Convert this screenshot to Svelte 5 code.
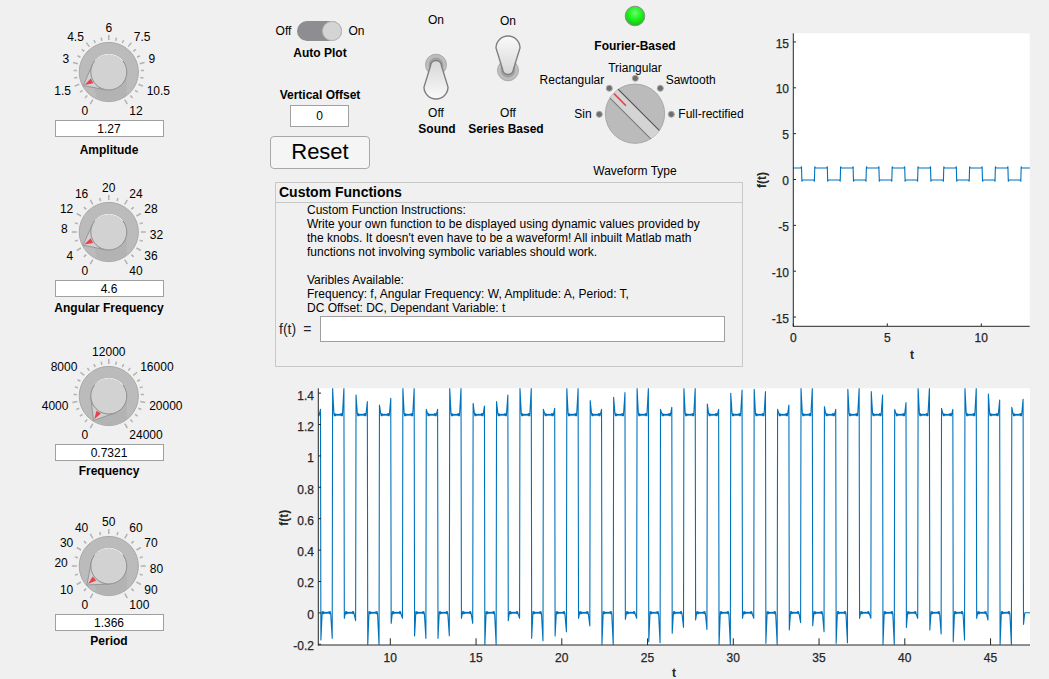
<script lang="ts">
    type Knob = { name: string; value: string; labels: string[]; minors: number; angle: number };

    const KNOBS: Knob[] = [
        { name: 'Amplitude', value: '1.27', labels: ['0', '1.5', '3', '4.5', '6', '7.5', '9', '10.5', '12'], minors: 2, angle: 208 },
        { name: 'Angular Frequency', value: '4.6', labels: ['0', '4', '8', '12', '16', '20', '24', '28', '32', '36', '40'], minors: 1, angle: 207 },
        { name: 'Frequency', value: '0.7321', labels: ['0', '4000', '8000', '12000', '16000', '20000', '24000'], minors: 3, angle: 238 },
        { name: 'Period', value: '1.366', labels: ['0', '10', '20', '30', '40', '50', '60', '70', '80', '90', '100'], minors: 1, angle: 221 }
    ];

    const CX = 108.8;
    const CY = 70;
    const rad = (deg: number) => (deg * Math.PI) / 180;
    const polar = (deg: number, r: number) => [CX + r * Math.cos(rad(deg)), CY - r * Math.sin(rad(deg))];

    function ticks(k: Knob) {
        const majors = k.labels.length - 1;
        const step = 300 / majors / (k.minors + 1);
        const out = [];
        for (let i = 0; i <= majors * (k.minors + 1); i++) {
            const major = i % (k.minors + 1) === 0;
            const a = 240 - i * step;
            const [x1, y1] = polar(a, 32);
            const [x2, y2] = polar(a, major ? 37 : 35.2);
            out.push({ x1, y1, x2, y2 });
        }
        return out;
    }

    // labels sit outside a fixed radius, pushed out by half their own box
    function labelPlace(text: string, index: number, count: number) {
        const a = rad(240 - (index * 300) / (count - 1));
        const c = Math.cos(a);
        const s = Math.sin(a);
        let w = 0;
        for (const ch of text) w += ch === '.' ? 3.33 : 6.67;
        return {
            x: CX + 41 * c + (Math.abs(c) < 0.01 ? 0 : Math.sign(c) * (w / 2)),
            y: CY - 41 * s + (s > 0 ? -2.7 : 3.3)
        };
    }

    // teardrop running from the cap of the knob out to its pointer tip
    function pointer(angle: number) {
        const r = 18;
        const [tx, ty] = polar(angle, 29);
        const alpha = Math.acos(r / 29);
        const base = Math.atan2(ty - CY, tx - CX);
        const p1 = [CX + r * Math.cos(base - alpha), CY + r * Math.sin(base - alpha)];
        const p2 = [CX + r * Math.cos(base + alpha), CY + r * Math.sin(base + alpha)];
        const [a1x, a1y] = polar(angle, 27.5);
        const [bx, by] = polar(angle, 19);
        const nx = -(by - CY) / 19;
        const ny = (bx - CX) / 19;
        return {
            drop: `M${p1[0]} ${p1[1]}L${tx} ${ty}L${p2[0]} ${p2[1]}Z`,
            red: `M${a1x} ${a1y}L${bx + nx * 2.6} ${by + ny * 2.6}L${bx - nx * 2.6} ${by - ny * 2.6}Z`
        };
    }

    // zoomed readings of the peak and trough at every edge of the large trace
    const TOPS = [88, 25, 25, 45, 65, 75, 55, 25, 25, 88, 88, 25, 25, 70, 78, 65, 45, 25, 25, 88, 85, 25, 25, 62, 88, 52, 38, 25, 25, 88, 82, 25, 25, 72, 88, 40, 30, 28, 35, 88, 75, 25, 25, 80, 88, 28, 25, 35, 45, 88, 68, 25, 25, 85, 88, 25, 25, 42, 60, 82, 58];
    const BOTS = [780, 775, 715, 722, 795, 795, 730, 715, 768, 775, 775, 767, 715, 730, 795, 795, 722, 715, 775, 782, 768, 755, 715, 738, 795, 795, 718, 715, 785, 788, 760, 742, 720, 748, 795, 795, 715, 715, 790, 795, 750, 728, 737, 755, 790, 788, 715, 715, 795, 795, 742, 715, 750, 762, 785, 780, 715, 720, 795, 795, 733];

    function mainTrace() {
        const hi = 414.7;
        const lo = 612.7;
        const pts: string[] = [`316 ${hi}`];
        let prev = 316;
        for (let k = 0; k < TOPS.length; k++) {
            const x = 320.7 + 11.71 * k;
            const top = 380 + TOPS[k] / 3;
            const bot = 380 + BOTS[k] / 3;
            const down = k % 2 === 0;
            const lvl = down ? hi : lo;
            let i = 0;
            for (let s = prev + 1.5; s < x - 1.3; s += 0.5) {
                const edge = Math.min(s - prev, x - s);
                const amp = edge < 3.5 ? 1.1 : 0.45;
                pts.push(`${s.toFixed(2)} ${(lvl + (i++ % 2 ? amp : -amp)).toFixed(2)}`);
            }
            if (down) pts.push(`${x - 0.2} ${top}`, `${x + 0.2} ${bot}`);
            else pts.push(`${x - 0.2} ${bot}`, `${x + 0.2} ${top}`);
            prev = x;
        }
        for (let s = prev + 1.5; s < 1032; s += 0.5) pts.push(`${s} ${lo}`);
        return pts.join(' ');
    }

    function smallTrace() {
        const pts: string[] = ['793 168'];
        for (let k = 0; k < 18; k++) {
            const x = 801.7 + 12.9 * k;
            const down = k % 2 === 0;
            const a = down ? 166.8 : 181.2;
            const b = down ? 181.2 : 166.8;
            const lvlA = down ? 168 : 180;
            pts.push(`${x - 1} ${lvlA}`, `${x - 0.2} ${a}`, `${x + 0.2} ${b}`, `${x + 1} ${down ? 180 : 168}`);
        }
        pts.push('1030 168');
        return pts.join(' ');
    }

    const MAIN_Y = ['-0.2', '0', '0.2', '0.4', '0.6', '0.8', '1', '1.2', '1.4'];
    const MAIN_X = [10, 15, 20, 25, 30, 35, 40, 45];
    const SMALL_Y = [15, 10, 5, 0, -5, -10, -15];
    const SMALL_X = [0, 5, 10];
</script>

{#snippet lever(up: boolean)}
    <svg class="lever" width="72" height="78" viewBox="0 0 72 78">
        <g transform={up ? 'matrix(1 0 0 -1 0 80)' : undefined}>
            <circle cx="36" cy="37.7" r="10.5" fill="#bdbdbd" stroke="#a9a9a9" />
            <circle cx="36" cy="38" r="7.4" fill="#a2a2a2" />
            <path d="M30.5 39A5.5 5.5 0 0 1 41.5 39L48 60A12 12 0 0 1 24 60Z" fill={up ? 'url(#lever-up)' : 'url(#lever-down)'} stroke="#7f7f7f" stroke-width="1.4" />
        </g>
    </svg>
{/snippet}

<svg class="defs" width="0" height="0" aria-hidden="true">
    <defs>
        <linearGradient id="lever-down" x1="0" y1="0" x2="0" y2="1">
            <stop offset="0" stop-color="#d6d6d6" />
            <stop offset="1" stop-color="#fafafa" />
        </linearGradient>
        <linearGradient id="lever-up" x1="0" y1="1" x2="0" y2="0">
            <stop offset="0" stop-color="#fafafa" />
            <stop offset="1" stop-color="#d6d6d6" />
        </linearGradient>
        <radialGradient id="lamp" cx="0.5" cy="0.35" r="0.65">
            <stop offset="0" stop-color="#66ff66" />
            <stop offset="0.6" stop-color="#14ee14" />
            <stop offset="1" stop-color="#22b522" />
        </radialGradient>
        <clipPath id="rotary-clip"><circle cx="635" cy="113.7" r="29.6" /></clipPath>
        <clipPath id="main-clip"><rect x="318.5" y="388.3" width="711.5" height="256.5" /></clipPath>
    </defs>
</svg>

<div class="app">
    <aside class="knobs">
        {#each KNOBS as k}
            {@const pt = pointer(k.angle)}
            <section class="knob">
                <svg width="218" height="118" viewBox="0 0 218 118">
                    {#each ticks(k) as t}
                        <line x1={t.x1} y1={t.y1} x2={t.x2} y2={t.y2} class="tick" />
                    {/each}
                    {#each k.labels as text, i}
                        {@const p = labelPlace(text, i, k.labels.length)}
                        <text x={p.x} y={p.y} class="scale">{text}</text>
                    {/each}
                    <circle cx={CX} cy={CY} r="29.6" class="dial" />
                    <path d="M{CX + 18} {CY}L{CX + 18} {CY + 23}A29.2 29.2 0 0 1 {CX - 12} {CY + 26.6}L{CX - 18} {CY}Z" fill="#b3b3b3" />
                    <path d={pt.drop} class="drop" />
                    <path d={pt.red} fill="#e8404a" />
                    <circle cx={CX} cy={CY} r="18" class="cap" />
                    <path d="M{CX - 14} {CY - 11.2}A18 18 0 0 1 {CX + 14} {CY - 11.2}" class="cap-light" />
                </svg>
                <div class="num">{k.value}</div>
                <div class="title">{k.name}</div>
            </section>
        {/each}
    </aside>

    <main class="workspace">
        <div class="upper">
            <div class="controls">
                <div class="top-row">
                    <div class="basics">
                        <div class="switch-row">
                            <span>Off</span>
                            <span class="track"><span class="thumb"></span></span>
                            <span>On</span>
                        </div>
                        <div class="title auto-title">Auto Plot</div>
                        <div class="title offset-title">Vertical Offset</div>
                        <div class="num offset-num">0</div>
                        <button class="reset" type="button">Reset</button>
                    </div>

                    <div class="toggle">
                        <span class="state">On</span>
                        {@render lever(false)}
                        <span class="state off">Off</span>
                        <span class="title toggle-title sound">Sound</span>
                    </div>
                    <div class="toggle series">
                        <span class="state">On</span>
                        {@render lever(true)}
                        <span class="state off">Off</span>
                        <span class="title toggle-title series-title">Series Based</span>
                    </div>

                    <div class="wave">
                        <svg class="lamp" width="22" height="22" viewBox="0 0 22 22">
                            <circle cx="11" cy="11" r="9.8" fill="url(#lamp)" stroke="#8f8f8f" />
                        </svg>
                        <div class="title fourier">Fourier-Based</div>
                        <svg class="rotary" width="218" height="100" viewBox="526 60 218 100">
                            <text x="635" y="67.7" class="mid">Triangular</text>
                            <text x="604.3" y="79.7" class="end">Rectangular</text>
                            <text x="591.7" y="113.7" class="end">Sin</text>
                            <text x="665.7" y="79.7" class="start">Sawtooth</text>
                            <text x="678.3" y="113.7" class="start">Full-rectified</text>
                            <circle cx="635.3" cy="78.3" r="3" class="dot" />
                            <circle cx="609.3" cy="88.3" r="3" class="dot" />
                            <circle cx="660.3" cy="88.3" r="3" class="dot" />
                            <circle cx="599.3" cy="114.3" r="3" class="dot" />
                            <circle cx="671.3" cy="114.3" r="3" class="dot" />
                            <circle cx="635" cy="113.7" r="29.6" class="dial" />
                            <g clip-path="url(#rotary-clip)">
                                <g transform="rotate(45 635 113.7)">
                                    <rect x="600" y="108.4" width="70" height="12" fill="#d4d4d4" />
                                    <line x1="600" y1="108.4" x2="670" y2="108.4" stroke="#4d4d4d" />
                                    <line x1="600" y1="120.4" x2="670" y2="120.4" stroke="#777" />
                                    <line x1="606" y1="114.4" x2="623" y2="114.4" stroke="#e8404a" stroke-width="1.6" />
                                </g>
                            </g>
                        </svg>
                        <div class="wave-title">Waveform Type</div>
                    </div>
                </div>

                <section class="panel">
                    <h2>Custom Functions</h2>
                    <p>
                        Custom Function Instructions:<br />
                        Write your own function to be displayed using dynamic values provided by<br />
                        the knobs. It doesn't even have to be a waveform! All inbuilt Matlab math<br />
                        functions not involving symbolic variables should work.<br />
                        <br />
                        Varibles Available:<br />
                        Frequency: f, Angular Frequency: W, Amplitude: A, Period: T,<br />
                        DC Offset: DC, Dependant Variable: t
                    </p>
                    <label class="fn-row">
                        <span class="fn-name">f(t)</span>
                        <span class="fn-eq">=</span>
                        <input type="text" />
                    </label>
                </section>
            </div>

            <svg class="small-plot" width="294" height="345" viewBox="755 25 294 345">
                <rect x="793.3" y="33.3" width="236.4" height="293" fill="#fff" />
                <polyline points={smallTrace()} class="trace" />
                <line x1="793.3" y1="33.3" x2="793.3" y2="326.8" class="axis" />
                <line x1="793" y1="326.3" x2="1029.7" y2="326.3" class="axis" />
                {#each SMALL_Y as v}
                    {@const y = 179.5 - v * 9.17}
                    <line x1="793.3" y1={y} x2="796" y2={y} class="axis" />
                    <text x="789" y={y + 1.6} class="end axis-text">{v}</text>
                {/each}
                {#each SMALL_X as v}
                    {@const x = 793.3 + v * 18.8}
                    <line x1={x} y1="326" x2={x} y2="323.4" class="axis" />
                    <text x={x} y="338" class="mid axis-text">{v}</text>
                {/each}
                <text x="912" y="355" class="mid axis-name">t</text>
                <text x="0" y="0" class="mid axis-name" transform="translate(761.7 180) rotate(-90)">f(t)</text>
            </svg>
        </div>

        <svg class="main-plot" width="779" height="299" viewBox="270 380 779 299">
            <rect x="318.3" y="388.3" width="711.7" height="256.7" fill="#fff" />
            <g clip-path="url(#main-clip)">
                <polyline points={mainTrace()} class="trace" />
            </g>
            <line x1="318.3" y1="388.3" x2="318.3" y2="645.5" class="axis" />
            <line x1="318" y1="645" x2="1030" y2="645" class="axis" />
            {#each MAIN_Y as v, i}
                {@const y = 644.3 - i * 31.4}
                <line x1="318.3" y1={y} x2="321" y2={y} class="axis" />
                <text x="314" y={y + 1.5 + i * 0.15} class="end axis-text">{v}</text>
            {/each}
            {#each MAIN_X as v}
                {@const x = 390.3 + (v - 10) * 17.15}
                <line x1={x} y1="645" x2={x} y2="638.3" class="axis" />
                <text x={x} y="658" class="mid axis-text">{v}</text>
            {/each}
            <text x="674" y="673.3" class="mid axis-name">t</text>
            <text x="0" y="0" class="mid axis-name" transform="translate(284 517.7) rotate(-90)">f(t)</text>
        </svg>
    </main>
</div>

<style>
    :global(body) {
        background: #f0f0f0;
    }
    .defs {
        position: absolute;
    }
    .app {
        width: 1049px;
        height: 679px;
        overflow: hidden;
        display: flex;
        background: #f0f0f0;
        color: #000;
        font: 12px/14px "Liberation Sans", Arial, sans-serif;
    }
    svg {
        display: block;
    }
    svg text {
        font: 12px "Liberation Sans", Arial, sans-serif;
        dominant-baseline: central;
        fill: #000;
    }

    .knobs {
        width: 218px;
        padding-top: 1.7px;
        flex: none;
    }
    .knob {
        display: flex;
        flex-direction: column;
        align-items: center;
    }
    .knob:nth-child(2) { margin-top: 5.3px; }
    .knob:nth-child(3) { margin-top: 11.3px; }
    .knob:nth-child(4) { margin-top: 17.5px; }
    .knob:nth-child(1) .title { margin-top: 6px; }
    .knob:nth-child(2) .title { margin-top: 4px; }
    .knob:nth-child(n + 3) .title { margin-top: 3px; }

    .tick {
        stroke: #b2b2b2;
        stroke-width: 1.5;
    }
    .scale {
        text-anchor: middle;
    }
    .dial {
        fill: #bbb;
        stroke: #a8a8a8;
    }
    .drop {
        fill: #d0d0d0;
        stroke: #969696;
    }
    .cap {
        fill: #d2d2d3;
        stroke: #8e8e8e;
    }
    .cap-light {
        fill: none;
        stroke: #f4f4f4;
    }
    .num {
        width: 109px;
        height: 17px;
        box-sizing: border-box;
        border: 1px solid #a0a0a0;
        background: #fff;
        text-align: center;
        line-height: 16px;
    }
    .title {
        font-weight: 700;
        text-align: center;
        white-space: nowrap;
    }

    .workspace {
        width: 779px;
        margin-left: 52px;
        flex: none;
    }
    .upper {
        height: 380px;
        display: flex;
    }
    .controls {
        width: 485px;
        flex: none;
    }
    .top-row {
        height: 181.5px;
        display: flex;
    }

    .basics {
        width: 100px;
        flex: none;
        display: flex;
        flex-direction: column;
        align-items: center;
    }
    .switch-row {
        margin-top: 21px;
        height: 20px;
        display: flex;
        align-items: center;
        gap: 6px;
    }
    .track {
        width: 45px;
        height: 20px;
        border-radius: 10px;
        background: #8e8e92;
        display: flex;
        justify-content: flex-end;
    }
    .thumb {
        width: 20px;
        height: 20px;
        border-radius: 50%;
        background: #d4d4d4;
        box-sizing: border-box;
        border: 1px solid #b8b8b8;
    }
    .auto-title {
        margin-top: 5px;
    }
    .offset-title {
        margin-top: 28px;
    }
    .offset-num {
        width: 59px;
        height: 21.5px;
        margin-top: 3px;
        margin-right: 1px;
        line-height: 20px;
    }
    .reset {
        width: 100px;
        height: 33.5px;
        margin-top: 9px;
        flex: none;
        padding: 0;
        background: #f5f5f5;
        border: 1px solid #a8a8a8;
        border-radius: 4px;
        color: #000;
        font: 22px "Liberation Sans", Arial, sans-serif;
    }

    .toggle {
        width: 72px;
        flex: none;
        display: flex;
        flex-direction: column;
        align-items: center;
        padding-top: 13px;
    }
    .toggle:nth-child(2) {
        margin-left: 30px;
    }
    .series {
        padding-top: 14px;
    }
    .series .lever {
        margin-bottom: -1px;
    }
    .off {
        margin-top: 1px;
    }
    .toggle-title {
        margin-top: 2px;
    }
    .sound {
        margin-left: 2px;
    }
    .series-title {
        margin-right: 4px;
    }

    .wave {
        width: 218px;
        flex: none;
        margin-left: -18px;
        display: flex;
        flex-direction: column;
        align-items: center;
    }
    .lamp {
        margin-top: 4.7px;
    }
    .fourier {
        margin-top: 12.8px;
    }
    .rotary {
        margin-top: 6.5px;
    }
    .wave-title {
        margin-top: 3.7px;
    }
    .mid { text-anchor: middle; }
    .end { text-anchor: end; }
    .start { text-anchor: start; }
    .dot {
        fill: #6e6e6e;
        stroke: #a8a8a8;
    }

    .panel {
        width: 468px;
        height: 185.5px;
        box-sizing: border-box;
        margin-left: 5px;
        border: 1px solid #c8c8c8;
    }
    .panel h2 {
        margin: 0;
        height: 20px;
        box-sizing: border-box;
        border-bottom: 1px solid #c8c8c8;
        padding-left: 3px;
        font: 700 14px/19px "Liberation Sans", Arial, sans-serif;
    }
    .panel p {
        margin: 0;
        padding-left: 31px;
    }
    .fn-row {
        margin-top: 1.5px;
        padding-left: 3px;
        display: flex;
        align-items: center;
        color: #262626;
        font-size: 14px;
    }
    .fn-name {
        width: 24.3px;
    }
    .fn-eq {
        width: 16.7px;
    }
    .fn-row input {
        width: 405px;
        height: 25.5px;
        box-sizing: border-box;
        border: 1px solid #a0a0a0;
        background: #fff;
        padding: 0;
        outline: none;
    }

    .small-plot {
        flex: none;
        margin-top: 25px;
    }
    .main-plot {
        display: block;
    }
    .trace {
        fill: none;
        stroke: #0072bd;
        stroke-width: 1.1;
        stroke-linejoin: round;
    }
    .axis {
        stroke: #262626;
        stroke-width: 1;
    }
    svg text.axis-text {
        fill: #262626;
        stroke: #262626;
        stroke-width: 0.25;
    }
    svg text.axis-name {
        fill: #262626;
        font-weight: 700;
    }
</style>
